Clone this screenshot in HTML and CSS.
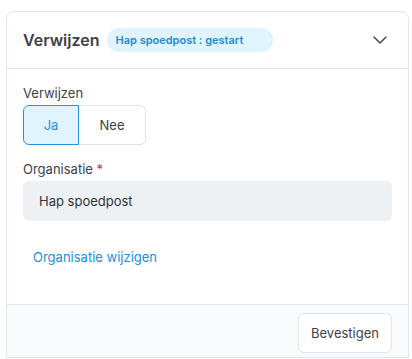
FILE: index.html
```html
<!DOCTYPE html>
<html lang="nl">
<head>
    <meta charset="UTF-8">
    <meta name="viewport" content="width=device-width, initial-scale=1.0">
    <title>Verwijzen</title>
    <link rel="stylesheet" href="styles.css">
</head>
<body>
    <div class="card">
        <div class="card-header">
            <h2 class="card-title">Verwijzen</h2>
            <span class="status-badge">Hap spoedpost : gestart</span>
            <button class="collapse-btn" aria-label="Inklappen">
                <svg width="14" height="8" viewBox="0 0 14 8" fill="none">
                    <path d="M1 1l6 6 6-6" stroke="#4a4f5a" stroke-width="1.6" stroke-linecap="round" stroke-linejoin="round"/>
                </svg>
            </button>
        </div>

        <div class="card-body">
            <div class="field">
                <label class="field-label">Verwijzen</label>
                <div class="toggle-group">
                    <button class="toggle-btn active">Ja</button>
                    <button class="toggle-btn">Nee</button>
                </div>
            </div>

            <div class="field">
                <label class="field-label">Organisatie <span class="required">*</span></label>
                <div class="readonly-input">Hap spoedpost</div>
            </div>

            <button class="link-btn">Organisatie wijzigen</button>
        </div>

        <div class="card-footer">
            <button class="btn">Bevestigen</button>
        </div>
    </div>
</body>
</html>
```
FILE: styles.css
```css
body {
    margin: 0;
    background: #ffffff;
    font-family: 'Inter', 'Noto Sans', sans-serif;
    color: #3c414c;
}

.card {
    margin: 11px 3px 0 6px;
    border: 1px solid #e1e7ee;
    border-radius: 8px 8px 0 0;
    background: #fff;
}

.card-header {
    display: flex;
    align-items: center;
    height: 56px;
    padding: 0 16px;
    border-bottom: 1px solid #e1e7ee;
}

.card-title {
    margin: 0;
    font-size: 16px;
    font-weight: 600;
    color: #3c414c;
}

.status-badge {
    margin-left: 8px;
    padding: 0 30px 0 8px;
    height: 24px;
    line-height: 24px;
    border-radius: 12px;
    background: #e0f4fe;
    color: #1e8bd6;
    font-size: 11px;
    font-weight: 600;
}

.collapse-btn {
    margin-left: auto;
    margin-right: 5px;
    padding: 0;
    border: none;
    background: none;
    display: flex;
    cursor: pointer;
}

.card-body {
    padding: 16px 16px 27px;
}

.field {
    display: flex;
    flex-direction: column;
    gap: 4px;
    margin-bottom: 16px;
}

.field-label {
    font-size: 13px;
    line-height: 16px;
    color: #3c414c;
}

.required {
    color: #e5243b;
}

.toggle-group {
    display: flex;
}

.toggle-btn {
    height: 40px;
    padding: 0;
    font-family: inherit;
    font-size: 13px;
    color: #3c414c;
    background: #fff;
    border: 1px solid #dde4ec;
    cursor: pointer;
}

.toggle-btn:first-child {
    border-radius: 6px 0 0 6px;
    width: 56px;
}

.toggle-btn:last-child {
    border-radius: 0 6px 6px 0;
    border-left: none;
    width: 67px;
}

.toggle-btn.active {
    background: #e0f4fe;
    border-color: #2492dc;
    color: #2492dc;
}

.readonly-input {
    height: 40px;
    line-height: 40px;
    padding: 0 16px;
    border-radius: 6px;
    background: #eef1f4;
    font-size: 13px;
    color: #2f343e;
}

.link-btn {
    display: block;
    height: 40px;
    margin-top: 2px;
    padding: 0 10px;
    border: none;
    background: none;
    font-family: inherit;
    font-size: 13px;
    color: #1a8fe0;
    cursor: pointer;
}

.card-footer {
    display: flex;
    justify-content: flex-end;
    padding: 8px 16px 4px;
    background: #f8fafc;
    border-top: 1px solid #e1e7ee;
}

.btn {
    height: 40px;
    padding: 0 12px;
    font-family: inherit;
    font-size: 13px;
    color: #3c414c;
    background: #fff;
    border: 1px solid #dde4ec;
    border-radius: 6px;
    cursor: pointer;
}
```
